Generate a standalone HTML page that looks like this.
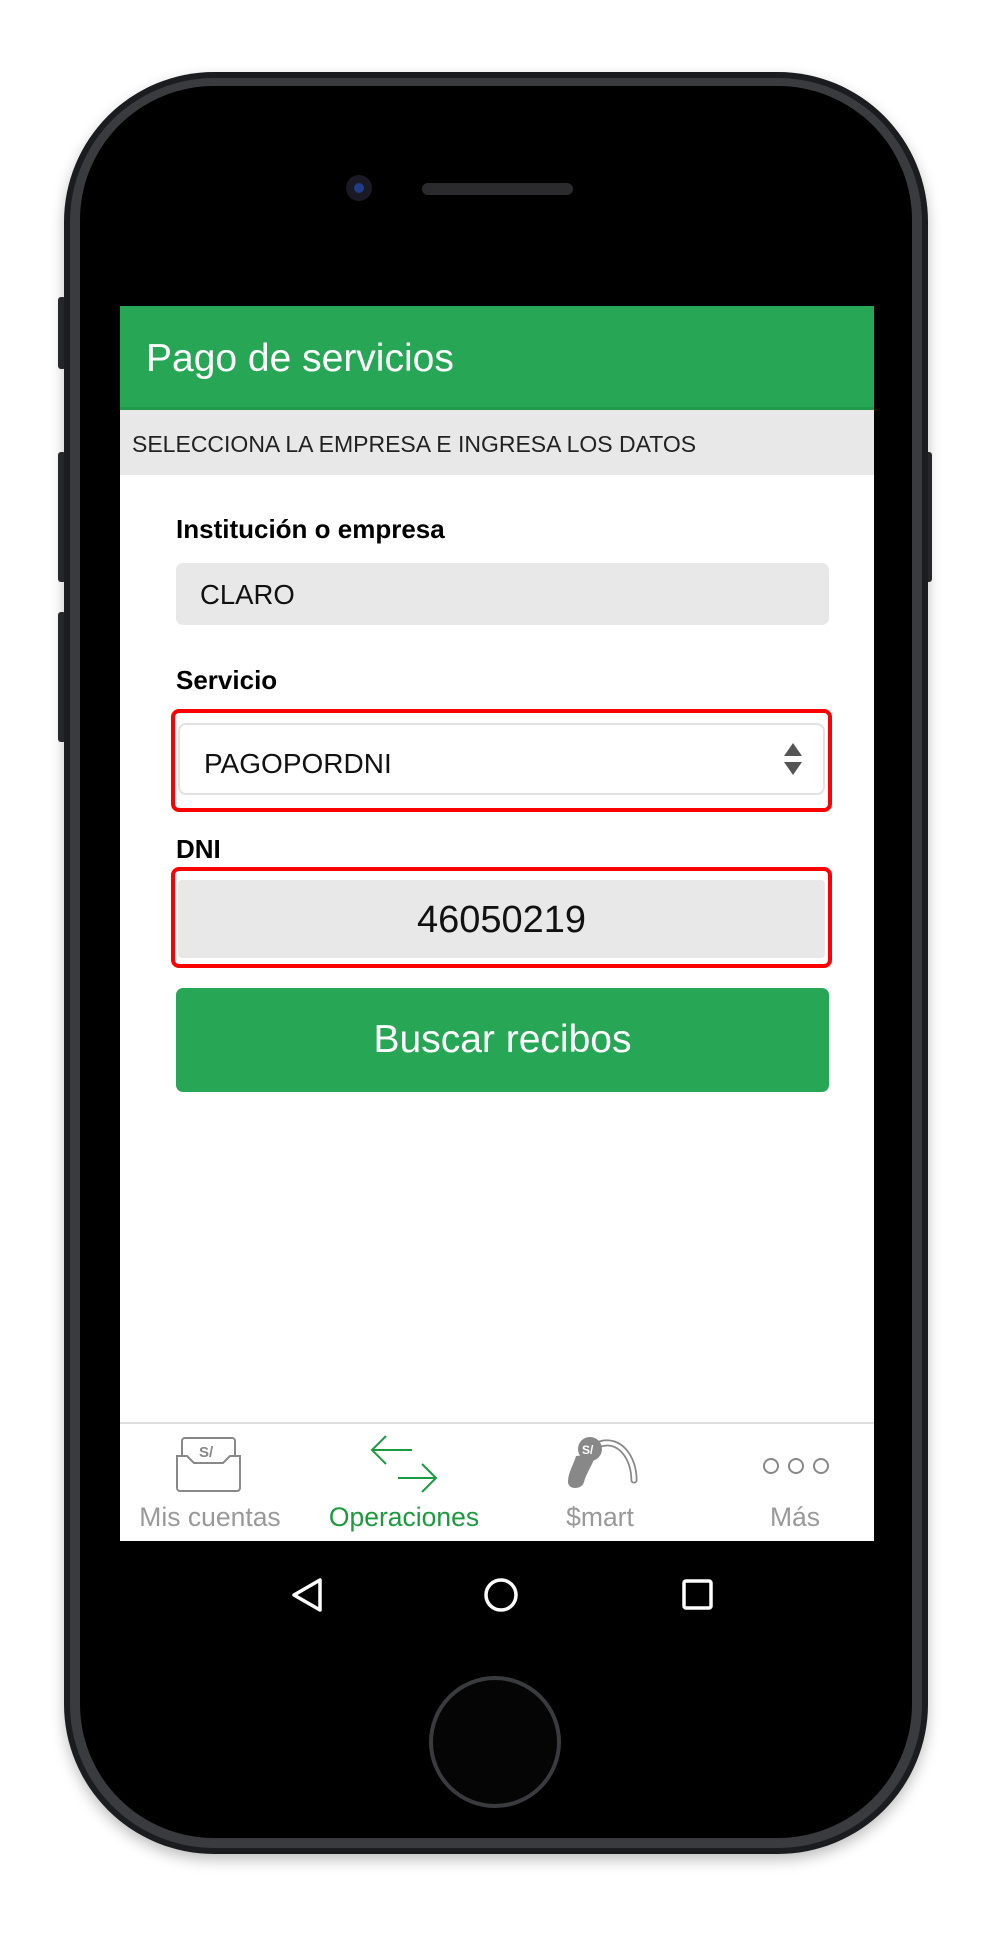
<!DOCTYPE html>
<html><head><meta charset="utf-8"><style>
*{margin:0;padding:0;box-sizing:border-box}
body{width:990px;height:1934px;background:#fff;position:relative;overflow:hidden;font-family:"Liberation Sans",sans-serif}
.a{position:absolute}
.t{white-space:nowrap;transform-origin:left center}
</style></head><body>
<!-- side buttons -->
<div class="a" style="left:58px;top:297px;width:8px;height:72px;background:#2a2b2e;border-radius:3px"></div>
<div class="a" style="left:58px;top:452px;width:8px;height:130px;background:#2a2b2e;border-radius:3px"></div>
<div class="a" style="left:58px;top:612px;width:8px;height:130px;background:#2a2b2e;border-radius:3px"></div>
<div class="a" style="left:924px;top:452px;width:8px;height:130px;background:#2a2b2e;border-radius:3px"></div>
<!-- phone body -->
<div class="a" style="left:64px;top:72px;width:864px;height:1782px;border-radius:150px;background:#1b1c1f;box-shadow:0 6px 14px rgba(0,0,0,.25)"></div>
<div class="a" style="left:70px;top:78px;width:852px;height:1770px;border-radius:144px;background:#3a3b3f"></div>
<div class="a" style="left:80px;top:86px;width:832px;height:1752px;border-radius:134px;background:#000"></div>
<!-- camera, speaker -->
<div class="a" style="left:346px;top:175px;width:26px;height:26px;border-radius:50%;background:#1a1a22"></div>
<div class="a" style="left:354px;top:183px;width:10px;height:10px;border-radius:50%;background:#1f3d8a"></div>
<div class="a" style="left:422px;top:183px;width:151px;height:12px;border-radius:6px;background:#2b2b2d"></div>
<!-- screen -->
<div class="a" style="left:120px;top:306px;width:754px;height:1235px;background:#fff"></div>
<div class="a" style="left:120px;top:306px;width:754px;height:104px;background:#27a755;border-bottom:3px solid #219a4c"></div>
<div class="a t" style="left:146px;top:337px;font-size:39px;line-height:44px;color:#fff">Pago de servicios</div>
<div class="a" style="left:120px;top:410px;width:754px;height:65px;background:#e8e8e8"></div>
<div class="a t" style="left:132px;top:430px;font-size:23px;line-height:28px;color:#222">SELECCIONA LA EMPRESA E INGRESA LOS DATOS</div>
<div class="a t" style="left:176px;top:514px;font-size:26px;line-height:30px;color:#000;font-weight:bold">Institución o empresa</div>
<div class="a" style="left:176px;top:563px;width:653px;height:62px;background:#e8e8e8;border-radius:7px"></div>
<div class="a t" style="left:200px;top:579px;font-size:27.5px;line-height:32px;color:#111">CLARO</div>
<div class="a t" style="left:176px;top:665px;font-size:26px;line-height:30px;color:#000;font-weight:bold">Servicio</div>
<div class="a" style="left:171px;top:709px;width:661px;height:103px;border:4px solid #f00;border-radius:8px"></div>
<div class="a" style="left:178px;top:723px;width:647px;height:72px;background:#fff;border:2px solid #e2e2e2;border-radius:8px"></div>
<div class="a t" style="left:204px;top:748px;font-size:28px;line-height:32px;color:#111">PAGOPORDNI</div>
<svg class="a" style="left:783px;top:741px" width="20" height="36"><path d="M10 2 L19 15 H1Z M10 34 L19 21 H1Z" fill="#555"/></svg>
<div class="a t" style="left:176px;top:834px;font-size:26px;line-height:30px;color:#000;font-weight:bold">DNI</div>
<div class="a" style="left:171px;top:867px;width:661px;height:101px;border:4px solid #f00;border-radius:8px"></div>
<div class="a" style="left:178px;top:880px;width:647px;height:78px;background:#e8e8e8;border-radius:4px"></div>
<div class="a" style="left:178px;top:898px;width:647px;text-align:center;font-size:38px;line-height:44px;color:#111">46050219</div>
<div class="a" style="left:176px;top:988px;width:653px;height:104px;background:#27a755;border-radius:7px"></div>
<div class="a" style="left:176px;top:1018px;width:653px;text-align:center;font-size:39px;line-height:44px;color:#fff">Buscar recibos</div>
<!-- tab bar -->
<div class="a" style="left:120px;top:1422px;width:754px;height:2px;background:#ddd"></div>
<svg class="a" style="left:174px;top:1436px" width="70" height="60" fill="none" stroke="#888" stroke-width="2">
<rect x="8" y="2" width="53" height="36" rx="3" fill="#fff"/>
<path d="M3 20 V52 a3 3 0 0 0 3 3 H63 a3 3 0 0 0 3-3 V20 H56 L49 27 H20 L13 20Z" fill="#fff"/>
<text x="25" y="21" font-size="15" fill="#888" stroke="none" font-family="Liberation Sans" font-weight="bold">S/</text>
</svg>
<svg class="a" style="left:368px;top:1432px" width="74" height="66" fill="none" stroke="#1b9a3e" stroke-width="2">
<path d="M4 18 H44 M18 4 L4 18 L18 32 M30 46 H68 M54 32 L68 46 L54 60"/>
</svg>
<svg class="a" style="left:564px;top:1436px" width="74" height="56">
<path d="M36 8 C56 2 70 22 70 44" fill="none" stroke="#888" stroke-width="7" stroke-linecap="round"/>
<path d="M36 8 C56 2 70 22 70 44" fill="none" stroke="#fff" stroke-width="3.5" stroke-linecap="round"/>
<path d="M12 20 C10 28 4 36 4 46 C4 54 18 54 20 46 C22 38 28 30 32 18Z" fill="#888"/>
<circle cx="26" cy="13" r="12" fill="#888"/>
<text x="18" y="18" font-size="12" fill="#fff" font-family="Liberation Sans" font-weight="bold">S/</text>
</svg>
<svg class="a" style="left:760px;top:1454px" width="72" height="24" fill="none" stroke="#888" stroke-width="2">
<circle cx="11" cy="12" r="7"/><circle cx="36" cy="12" r="7"/><circle cx="61" cy="12" r="7"/></svg>
<div class="a" style="left:110px;top:1502px;width:200px;text-align:center;font-size:26.5px;color:#999">Mis cuentas</div>
<div class="a" style="left:304px;top:1502px;width:200px;text-align:center;font-size:26.5px;color:#1b9a3e">Operaciones</div>
<div class="a" style="left:500px;top:1502px;width:200px;text-align:center;font-size:26.5px;color:#999">$mart</div>
<div class="a" style="left:695px;top:1502px;width:200px;text-align:center;font-size:26.5px;color:#999">Más</div>
<!-- android nav -->
<svg class="a" style="left:280px;top:1570px" width="440" height="50" fill="none" stroke="#fff" stroke-width="3.5">
<path d="M40 10 L40 40 L14 25Z" stroke-linejoin="round"/>
<circle cx="221" cy="25" r="15"/>
<rect x="404" y="11" width="27" height="27" rx="2"/>
</svg>
<!-- home button -->
<div class="a" style="left:429px;top:1676px;width:132px;height:132px;border-radius:50%;border:4px solid #3a3b3f;background:#050505"></div>
</body></html>
